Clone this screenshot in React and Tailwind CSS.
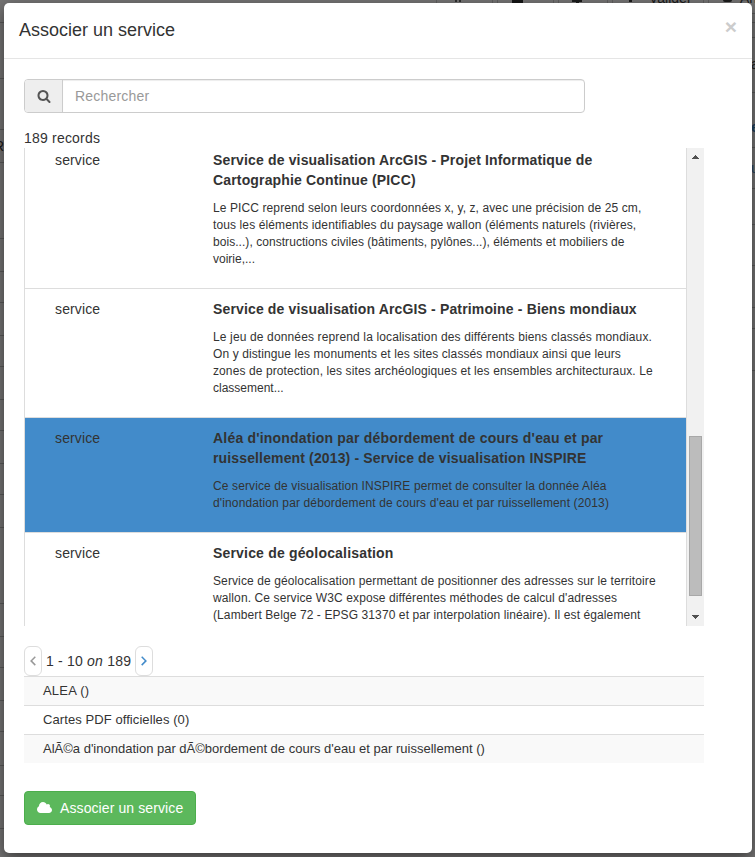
import React from "react";

const leftRules = [22, 78, 129, 162, 238, 271, 302, 335, 366, 399, 430, 463, 494, 527, 603, 636, 667, 700, 731, 765, 795, 828];
const rightRules = [13, 22, 37, 92, 147, 188, 224, 265, 307, 328, 370];
const toolbarRules = [436, 492, 497, 553, 558, 607, 612, 703, 708];

// Dimmed page that shows around the edges of the dialog
function Backdrop() {
  return (
    <div className="absolute inset-0 overflow-hidden bg-[#757474]">
      {leftRules.map((y) => (
        <div key={y} className="absolute left-0 h-px w-[4px] bg-[#5a5a5a]" style={{ top: y }} />
      ))}
      {rightRules.map((y) => (
        <div key={y} className="absolute right-0 h-px w-[4px] bg-[#5a5a5a]" style={{ top: y }} />
      ))}
      {toolbarRules.map((x) => (
        <div key={x} className="absolute top-0 h-[3px] w-px bg-[#606060]" style={{ left: x }} />
      ))}
      <span className="absolute -left-[6px] top-[136px] text-[14px] leading-5 text-[#1a1a1a]">R</span>
      <span className="absolute left-[751px] top-[54px] text-[14px] leading-5 text-[#222]">a</span>
      <span className="absolute left-[751px] top-[117px] text-[14px] font-bold leading-5 text-[#1d405f]">e</span>
      <span className="absolute left-[751px] top-[158px] text-[14px] leading-5 text-[#1d405f]">u</span>
      <div className="absolute left-[455px] top-0 h-[2px] w-[2px] bg-[#2f2f2f]" />
      <div className="absolute left-[459px] top-0 h-[2px] w-[2px] bg-[#2f2f2f]" />
      <div className="absolute left-[512px] top-0 h-[3px] w-[11px] bg-[#151515]" />
      <div className="absolute left-[572px] top-0 h-[2px] w-[10px] bg-[#1c1c1c]" />
      <div className="absolute left-[576px] top-0 h-[3px] w-[3px] bg-[#1c1c1c]" />
      <div className="absolute left-[629px] top-0 h-[2px] w-[3px] bg-[#1c1c1c]" />
      <span className="absolute left-[649px] -top-[12px] text-[14px] leading-5 text-[#1a1a1a]">Valider</span>
      <div className="absolute left-[723px] top-0 h-[2px] w-[9px] rounded-b-full bg-[#1c1c1c]" />
      <span className="absolute left-[740px] -top-[12px] text-[14px] leading-5 text-[#1a1a1a]">An</span>
    </div>
  );
}

// Each line carries its own tracking
const services = [
  {
    box: "h-[141px] pt-[2px] border-b",
    title: [
      ["Service de visualisation ArcGIS - Projet Informatique de", "tracking-[0.157px]"],
      ["Cartographie Continue (PICC)", "tracking-[0.157px]"],
    ],
    text: [
      ["Le PICC reprend selon leurs coordonnées x, y, z, avec une précision de 25 cm,", "tracking-[0.1px]"],
      ["tous les éléments identifiables du paysage wallon (éléments naturels (rivières,", "tracking-[0.115px]"],
      ["bois...), constructions civiles (bâtiments, pylônes...), éléments et mobiliers de", "tracking-[0.05px]"],
      ["voirie,...", ""],
    ],
  },
  {
    box: "h-[129px] pt-[10px] border-b",
    title: [["Service de visualisation ArcGIS - Patrimoine - Biens mondiaux", "tracking-[0.145px]"]],
    text: [
      ["Le jeu de données reprend la localisation des différents biens classés mondiaux.", "tracking-[0.137px]"],
      ["On y distingue les monuments et les sites classés mondiaux ainsi que leurs", "tracking-[0.095px]"],
      ["zones de protection, les sites archéologiques et les ensembles architecturaux. Le", "tracking-[0.1px]"],
      ["classement...", ""],
    ],
  },
  {
    box: "h-[115px] pt-[10px] border-b bg-[#428bca]",
    title: [
      ["Aléa d'inondation par débordement de cours d'eau et par", "tracking-[0.2px]"],
      ["ruissellement (2013) - Service de visualisation INSPIRE", "tracking-[0.14px]"],
    ],
    text: [
      ["Ce service de visualisation INSPIRE permet de consulter la donnée Aléa", "tracking-[0.115px]"],
      ["d'inondation par débordement de cours d'eau et par ruissellement (2013)", "tracking-[0.13px]"],
    ],
  },
  {
    box: "h-[129px] pt-[10px]",
    title: [["Service de géolocalisation", "tracking-[0.18px]"]],
    text: [
      ["Service de géolocalisation permettant de positionner des adresses sur le territoire", "tracking-[0.11px]"],
      ["wallon. Ce service W3C expose différentes méthodes de calcul d'adresses", "tracking-[0.11px]"],
      ["(Lambert Belge 72 - EPSG 31370 et par interpolation linéaire). Il est également", "tracking-[0.1px]"],
    ],
  },
];

function SearchIcon() {
  return (
    <svg width="14" height="14" viewBox="0 0 1792 1792" fill="#555">
      <path d="M1216 832q0-185-131.5-316.5t-316.5-131.5-316.5 131.5-131.5 316.5 131.5 316.5 316.5 131.5 316.5-131.5 131.5-316.5zm512 832q0 52-38 90t-90 38q-54 0-90-38l-343-342q-179 124-399 124-143 0-273.5-55.5t-225-150-150-225-55.5-273.5 55.5-273.5 150-225 225-150 273.5-55.5 273.5 55.5 225 150 150 225 55.5 273.5q0 220-124 399l343 343q37 37 37 90z" />
    </svg>
  );
}

function CloudIcon() {
  return (
    <svg width="16" height="14" viewBox="64 0 2048 1792" fill="currentColor">
      <path d="M1984 1152q0 159-112.5 271.5t-271.5 112.5h-1088q-185 0-316.5-131.5t-131.5-316.5q0-132 71-241.5t187-163.5q-2-28-2-43 0-212 150-362t362-150q158 0 286.5 88t187.5 230q70-62 166-62 106 0 181 75t75 181q0 75-41 138 129 30 213 134.5t84 239.5z" />
    </svg>
  );
}

function Chevron({ color, className }) {
  return (
    <svg className={className} width="6" height="10" viewBox="0 0 6 10" fill="none" stroke={color} strokeWidth="1.5">
      <path d="M5.3 0.7L1.1 4.9l4.2 4.2" />
    </svg>
  );
}

function ServiceRow({ box, title, text }) {
  return (
    <div className={`flex shrink-0 border-[#ddd] ${box}`}>
      <div className="w-[188px] shrink-0 pl-[30px] tracking-[0.13px]">service</div>
      <div className="whitespace-nowrap">
        {title.map(([line, tracking]) => (
          <div key={line} className={`font-bold leading-5 ${tracking}`}>{line}</div>
        ))}
        <div className="mt-[10px] text-[12px] leading-[17px]">
          {text.map(([line, tracking]) => (
            <div key={line} className={tracking}>{line}</div>
          ))}
        </div>
      </div>
    </div>
  );
}

function Scrollbar() {
  return (
    <div className="flex w-[17px] shrink-0 flex-col items-center bg-[#f1f1f1]">
      <svg width="17" height="17" viewBox="0 0 17 17" fill="#505050" shapeRendering="crispEdges">
        <path d="M8 7h1v1h1v1h1v1h1v1H5v-1h1V9h1V8h1z" />
      </svg>
      <div className="mt-[271px] h-[160px] w-[13px] border border-[#a8a8a8] bg-[#bcbcbc]" />
      <svg className="mt-[13px]" width="17" height="17" viewBox="0 0 17 17" fill="#505050" shapeRendering="crispEdges">
        <path d="M5 6h7v1h-1v1h-1v1H9v1H8V9H7V8H6V7H5z" />
      </svg>
    </div>
  );
}

const layers = [
  { name: "ALEA ()", style: "bg-[#f9f9f9] tracking-[0.2px]" },
  { name: "Cartes PDF officielles (0)", style: "bg-white tracking-[0.08px]" },
  { name: "AlÃ©a d'inondation par dÃ©bordement de cours d'eau et par ruissellement ()", style: "bg-[#f9f9f9]" },
];

export default function App() {
  return (
    <div className="relative h-[857px] w-[755px] overflow-hidden pl-[4px] pt-[3px] font-['Liberation_Sans',Arial,sans-serif] text-[14px] leading-5 text-[#333]">
      <Backdrop />
      <div className="relative flex h-[850px] w-[748px] flex-col rounded-[5px] bg-white shadow-[0_5px_15px_rgba(0,0,0,0.5)]">
        <header className="flex h-[56px] shrink-0 items-start justify-between border-b border-[#e5e5e5] pl-[15px] pr-[15px]">
          <h4 className="mt-[14px] text-[18px] leading-[26px]">Associer un service</h4>
          <button className="mt-[13px] text-[21px] font-bold leading-[21px] text-[#ccc]">×</button>
        </header>

        <main className="flex flex-col items-start pl-[20px] pt-[20px]">
          <div className="flex h-[34px] w-[561px] overflow-hidden rounded-[4px] border border-[#ccc]">
            <div className="flex w-[38px] items-center justify-center border-r border-[#ccc] bg-[#eee]">
              <SearchIcon />
            </div>
            <div className="flex flex-1 items-center pl-[12px] text-[#999] shadow-[inset_0_1px_1px_rgba(0,0,0,0.075)]">
              <span className="tracking-[0.2px]">Rechercher</span>
            </div>
          </div>

          <div className="mt-[15px] h-[20px] tracking-[0.2px]">189 records</div>

          <div className="flex h-[478px] w-[680px] overflow-hidden border-l border-[#ddd]">
            <div className="flex min-w-0 flex-1 flex-col overflow-hidden border-r border-[#ddd]">
              {services.map((s) => (
                <ServiceRow key={s.title[0][0]} {...s} />
              ))}
            </div>
            <Scrollbar />
          </div>

          <div className="mt-[20px] flex h-[30px] items-center">
            <button className="flex h-[30px] w-[18px] items-center justify-center rounded-[6px] border border-[#ddd]">
              <Chevron color="#999" className="mb-px shrink-0" />
            </button>
            <span className="ml-[4px] w-[89px] whitespace-nowrap tracking-[0.2px]">
              1 - 10 <i>on</i> 189
            </span>
            <button className="flex h-[30px] w-[18px] items-center justify-center rounded-[6px] border border-[#ddd]">
              <Chevron color="#428bca" className="mb-px shrink-0 -scale-x-100" />
            </button>
          </div>

          <div className="w-[680px] text-[13px]">
            {layers.map((l) => (
              <div key={l.name} className={`flex h-[29px] items-center border-t border-[#ddd] pl-[19px] ${l.style}`}>
                {l.name}
              </div>
            ))}
          </div>

          <button className="mt-[28px] flex h-[34px] w-[172px] items-center rounded-[4px] border border-[#4cae4c] bg-[#5cb85c] pl-[12px] text-white">
            <CloudIcon />
            <span className="ml-[7px] whitespace-nowrap tracking-[0.1px]">Associer un service</span>
          </button>
        </main>
      </div>
    </div>
  );
}
